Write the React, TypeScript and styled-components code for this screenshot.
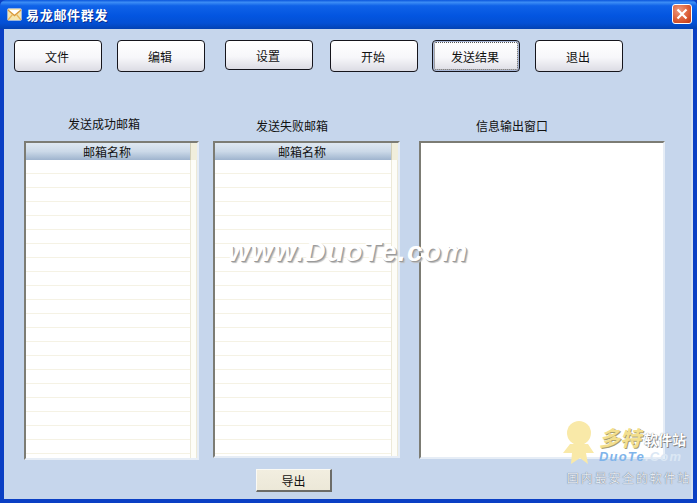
import { createGlobalStyle } from "styled-components"
import styled from "styled-components"

const FONT = `"Noto Sans CJK SC", "Liberation Sans", sans-serif`

const GlobalStyle = createGlobalStyle`
  html, body { margin: 0; padding: 0; background: #c6d6ec; }
  * { box-sizing: border-box; }
`

const Window = styled.div`
  position: relative;
  width: 697px;
  height: 503px;
  display: flex;
  flex-direction: column;
  overflow: hidden;
  background: #0a3fc4;
  font-family: ${FONT};
  color: #111;
`

const TitleBar = styled.div`
  flex: 0 0 29px;
  display: flex;
  align-items: center;
  padding: 0 5px 1px 7px;
  border-radius: 6px 6px 0 0;
  background: linear-gradient(180deg, #0a55dc 0%, #3c8df5 8%, #0f62e8 20%, #0355e0 55%, #0450d4 80%, #0342b4 100%);
`

const TitleText = styled.span`
  margin-left: 4px;
  font-size: 13px;
  font-weight: 700;
  color: #fff;
  letter-spacing: 0.7px;
  text-shadow: 1px 1px 0 #0a2f90;
`

const CloseButton = styled.div`
  margin-left: auto;
  width: 20px;
  height: 20px;
  display: flex;
  align-items: center;
  justify-content: center;
  border: 1px solid #fff;
  border-radius: 3px;
  background: radial-gradient(circle at 35% 30%, #ee9a80 0%, #dc5f38 55%, #bf3512 100%);
`

const Client = styled.div`
  flex: 1;
  margin: 0 4px 4px;
  display: flex;
  flex-direction: column;
  background: #c6d6ec;
  border-right: 2px solid #d4dfef;
`

const Toolbar = styled.div`
  display: flex;
  align-items: flex-start;
  padding: 11px 0 0 10px;
`

const ToolButton = styled.div<{ $offset: number; $short?: boolean; $focused?: boolean }>`
  flex: 0 0 88px;
  height: ${(p) => (p.$short ? 30 : 32)}px;
  margin-left: ${(p) => p.$offset}px;
  display: flex;
  align-items: center;
  justify-content: center;
  padding-right: 2px;
  font-size: 12px;
  border: 1px solid #15151c;
  border-radius: 4px;
  background: linear-gradient(180deg, #ffffff 0%, #f7f7fa 55%, #dcdce4 100%);
  outline: ${(p) => (p.$focused ? "1px dotted #555" : "none")};
  outline-offset: -3px;
  box-shadow: ${(p) => (p.$focused ? "inset 0 0 0 1px #a8b8d8" : "none")};
`

const Panels = styled.div`
  display: flex;
  align-items: flex-start;
  margin-top: 43px;
  padding-left: 20px;
`

const Panel = styled.div<{ $width: number; $offset: number }>`
  flex: 0 0 ${(p) => p.$width}px;
  margin-left: ${(p) => p.$offset}px;
`

const PanelLabel = styled.div<{ $indent: number; $lower?: boolean }>`
  height: 26px;
  padding: ${(p) => (p.$lower ? 2 : 0)}px 0 0 ${(p) => p.$indent}px;
  font-size: 12px;
  line-height: 17px;
  white-space: nowrap;
`

const ListBox = styled.div<{ $height: number }>`
  position: relative;
  height: ${(p) => p.$height}px;
  display: flex;
  flex-direction: column;
  border: 2px solid #e6edf6;
  border-top-color: #7c7c74;
  border-left-color: #7c7c74;
  background: #fff;
`

const ListHeader = styled.div`
  flex: 0 0 17px;
  display: flex;
  background: #f0eedc;
`

const HeaderCell = styled.div`
  flex: 1;
  display: flex;
  align-items: center;
  justify-content: center;
  padding-right: 2px;
  font-size: 12px;
  line-height: 16px;
  background: linear-gradient(180deg, #dfe8f1 0%, #cbd9e8 50%, #9fb4ce 100%);
`

const ScrollGap = styled.div`
  flex: 0 0 7px;
  border-left: 1px solid #d0ceb8;
`

const ListBody = styled.div`
  flex: 1;
  display: flex;
  background: repeating-linear-gradient(180deg, #ffffff 0 13px, #f5f2e4 13px 14px);
`

const BodyFill = styled.div`
  flex: 1;
`

const BodyEdge = styled.div`
  flex: 0 0 7px;
  background: #fdfdf8;
  border-left: 1px solid #ece9d8;
  border-right: 1px solid #ece9d8;
`

const OutputBox = styled.div`
  height: 318px;
  background: #fff;
  border: 2px solid #e6edf6;
  border-top-color: #7c7c74;
  border-left-color: #7c7c74;
`

const Footer = styled.div`
  padding: 9px 0 0 252px;
`

const ExportButton = styled.div`
  width: 76px;
  height: 23px;
  display: flex;
  align-items: center;
  justify-content: center;
  font-size: 12px;
  background: linear-gradient(180deg, #f2eee0 0%, #ece8d8 100%);
  border-top: 1px solid #fbfaf4;
  border-left: 1px solid #fbfaf4;
  border-right: 2px solid #6c6c68;
  border-bottom: 2px solid #6c6c68;
`

const SiteMark = styled.div`
  position: absolute;
  left: 228px;
  top: 234px;
  font-family: "Liberation Sans", sans-serif;
  font-size: 28px;
  font-weight: 700;
  font-style: italic;
  letter-spacing: 1.3px;
  line-height: 36px;
  color: #fff;
  white-space: nowrap;
  text-shadow: 1px 1px 0 #9a9a9a, 2px 2px 1px #bcbcbc;
  pointer-events: none;
`

const Badge = styled.div`
  position: absolute;
  right: 6px;
  top: 420px;
  width: 130px;
  height: 68px;
  pointer-events: none;
`

const BadgeFigure = styled.svg`
  position: absolute;
  left: 0;
  top: 0;
`

const BadgeTop = styled.div`
  position: absolute;
  left: 38px;
  top: 7px;
  height: 21px;
  display: flex;
  align-items: flex-end;
  white-space: nowrap;
`

const BadgeName = styled.span`
  font-size: 21px;
  line-height: 21px;
  font-weight: 700;
  font-style: italic;
  color: #f3df8e;
  text-shadow: 1px 1px 0 #a8a070;
`

const BadgeSmall = styled.span`
  margin-left: 3px;
  font-size: 14px;
  line-height: 18px;
  font-weight: 700;
  color: #fff;
  text-shadow: 0 0 1px #777, 1px 1px 0 #888;
`

const BadgeUrl = styled.div`
  position: absolute;
  left: 38px;
  top: 29px;
  font-family: "Liberation Sans", sans-serif;
  font-size: 13px;
  line-height: 16px;
  font-weight: 700;
  font-style: italic;
  letter-spacing: 1.2px;
  color: #7fb4ea;
`

const BadgeUrlTail = styled.span`
  color: #dbe7f4;
`

const BadgeSlogan = styled.div`
  position: absolute;
  right: 0;
  top: 50px;
  font-size: 12px;
  line-height: 15px;
  letter-spacing: 1.8px;
  white-space: nowrap;
  color: #e4eaf2;
  text-shadow: 0 0 1px #4e5662;
`

const toolButtons = [
  { label: "文件", offset: 0 },
  { label: "编辑", offset: 15 },
  { label: "设置", offset: 20, short: true },
  { label: "开始", offset: 17 },
  { label: "发送结果", offset: 14, focused: true },
  { label: "退出", offset: 15 },
]

const lists = [
  { label: "发送成功邮箱", width: 175, height: 319, offset: 0, indent: 44, lower: false },
  { label: "发送失败邮箱", width: 187, height: 317, offset: 14, indent: 43, lower: true },
]

const App = () => {
  return (
    <Window>
      <GlobalStyle />
      <TitleBar>
        <svg width="15" height="15" viewBox="0 0 15 15">
          <rect x="0.5" y="1.5" width="14" height="12" rx="1.5" fill="#f4e6b0" stroke="#9db4d8" />
          <path d="M1 3 L7.5 8.5 L14 3" fill="#fff" stroke="#d99a3c" strokeWidth="1.4" />
          <path d="M1 13 L5.5 7.5 M14 13 L9.5 7.5" stroke="#e8b45a" strokeWidth="1.2" />
        </svg>
        <TitleText>易龙邮件群发</TitleText>
        <CloseButton>
          <svg width="12" height="12" viewBox="0 0 12 12">
            <path d="M1.5 1.5 L10.5 10.5 M10.5 1.5 L1.5 10.5" stroke="#fff" strokeWidth="2.2" />
          </svg>
        </CloseButton>
      </TitleBar>

      <Client>
        <Toolbar>
          {toolButtons.map((item) => (
            <ToolButton key={item.label} $offset={item.offset} $short={item.short} $focused={item.focused}>
              {item.label}
            </ToolButton>
          ))}
        </Toolbar>

        <Panels>
          {lists.map((item) => (
            <Panel key={item.label} $width={item.width} $offset={item.offset}>
              <PanelLabel $indent={item.indent} $lower={item.lower}>{item.label}</PanelLabel>
              <ListBox $height={item.height}>
                <ListHeader>
                  <HeaderCell>邮箱名称</HeaderCell>
                  <ScrollGap />
                </ListHeader>
                <ListBody>
                  <BodyFill />
                  <BodyEdge />
                </ListBody>
              </ListBox>
            </Panel>
          ))}
          <Panel $width={246} $offset={19}>
            <PanelLabel $indent={57} $lower>信息输出窗口</PanelLabel>
            <OutputBox />
          </Panel>
        </Panels>

        <Footer>
          <ExportButton>导出</ExportButton>
        </Footer>
      </Client>

      <SiteMark>www.DuoTe.com</SiteMark>

      <Badge>
        <BadgeFigure width="36" height="46" viewBox="0 0 36 46">
          <circle cx="18" cy="13" r="12" fill="#f9e9a8" />
          <path d="M9 24 L27 24 L33 33 L25 33 L27 44 L19 38 L10 44 L11 33 L2 33 Z" fill="#f9e9a8" />
        </BadgeFigure>
        <BadgeTop>
          <BadgeName>多特</BadgeName>
          <BadgeSmall>软件站</BadgeSmall>
        </BadgeTop>
        <BadgeUrl>
          DuoTe<BadgeUrlTail>.Com</BadgeUrlTail>
        </BadgeUrl>
        <BadgeSlogan>国内最安全的软件站</BadgeSlogan>
      </Badge>
    </Window>
  )
}

export default App
